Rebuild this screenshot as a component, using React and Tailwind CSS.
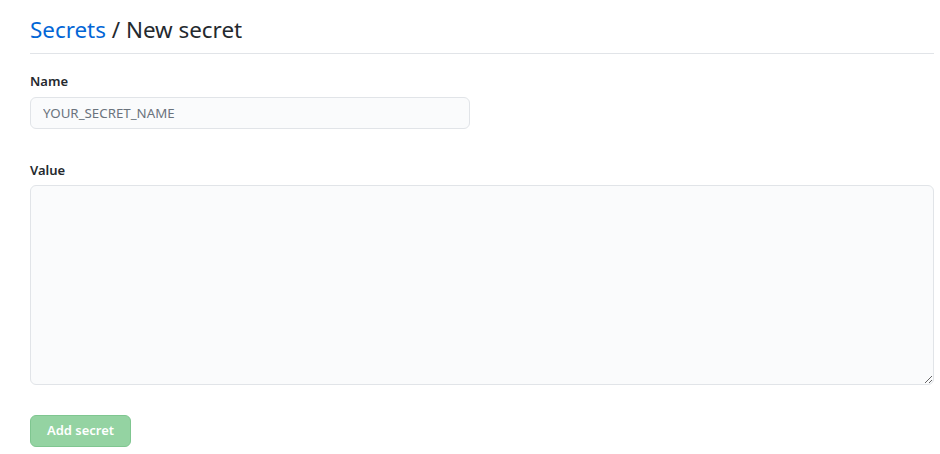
import React from 'react';

const App = () => {
  return (
    <div className="w-[940px] h-[454px] bg-white text-[#24292e]" style={{ fontFamily: '"Noto Sans", "Open Sans", sans-serif' }}>
      <div className="ml-[30px] w-[904px]">
        {/* Header */}
        <div className="pt-[14px] pb-[7px] border-b border-[#e1e4e8]">
          <h2 className="text-[22.4px] leading-[32px] font-normal">
            <a href="#" className="text-[#0366d6]">Secrets</a> / New secret
          </h2>
        </div>

        <form className="pt-[14px]">
          <dl className="mb-[28px]">
            <dt className="mb-[5px]">
              <label className="text-[13px] leading-[20px] font-semibold">Name</label>
            </dt>
            <dd>
              <input
                type="text"
                placeholder="YOUR_SECRET_NAME"
                className="w-[440px] h-[32px] px-[12px] text-[13.3px] bg-[#fafbfc] border border-[#e1e4e8] rounded-[6px] placeholder:text-[#6a737d] outline-none"
              />
            </dd>
          </dl>

          <dl className="mb-[30px]">
            <dt className="mb-[4px]">
              <label className="text-[13px] leading-[20px] font-semibold">Value</label>
            </dt>
            <dd>
              <textarea
                className="block w-[904px] h-[200px] px-[12px] py-[8px] text-[14px] bg-[#fafbfc] border border-[#e1e4e8] rounded-[6px] outline-none"
              />
            </dd>
          </dl>

          <button
            type="button"
            disabled
            className="w-[101px] h-[32px] text-[13px] font-semibold text-white bg-[#94d3a2] border border-[#7fc690] rounded-[6px]"
          >
            Add secret
          </button>
        </form>
      </div>
    </div>
  );
};

export default App;
